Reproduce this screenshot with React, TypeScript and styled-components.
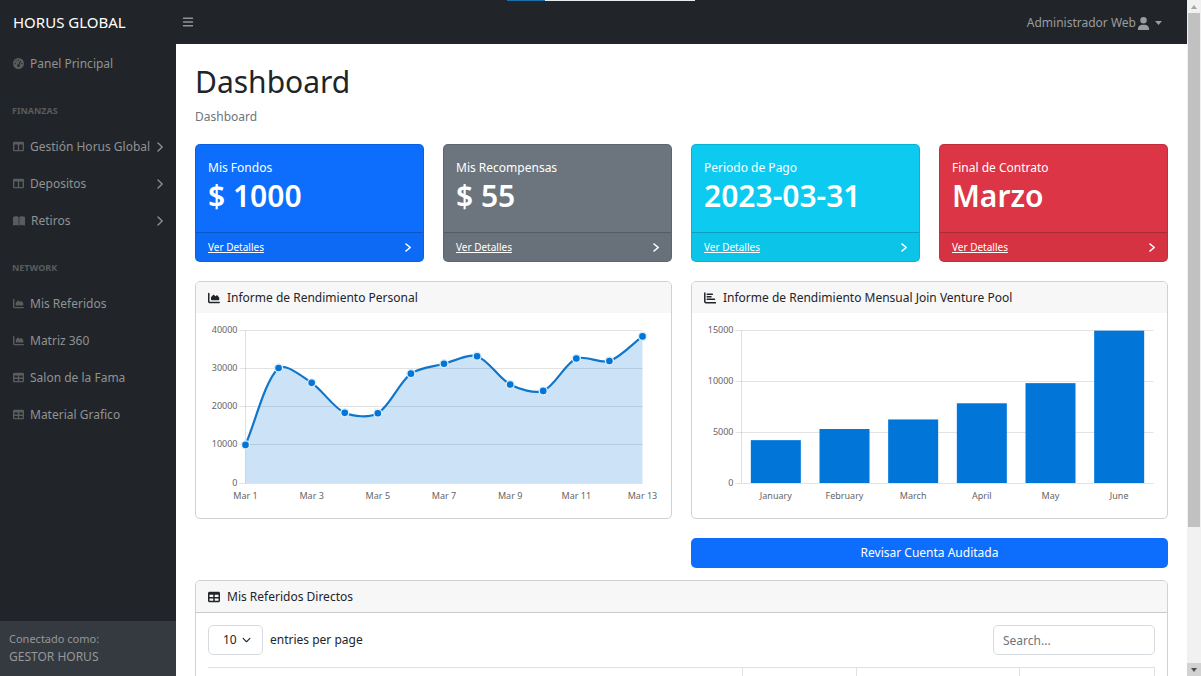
import React from "react";
import styled, { createGlobalStyle } from "styled-components";
import {
  FaBars,
  FaBookOpen,
  FaChartArea,
  FaChevronDown,
  FaGaugeHigh,
  FaTable,
  FaTableColumns,
  FaUser,
} from "react-icons/fa6";

const GlobalStyle = createGlobalStyle`
  *, *::before, *::after { box-sizing: border-box; }
  body {
    margin: 0;
    font-family: "Segoe UI", "Noto Sans", "Open Sans", sans-serif;
    font-size: 12px;
    line-height: 18px;
    color: #212529;
    background: #fff;
  }
  button, input, select { font: inherit; color: inherit; }
`;

const Window = styled.div`
  display: flex;
  height: 100vh;
  overflow: hidden;
`;

const Shell = styled.div`
  flex: 1;
  min-width: 0;
  display: grid;
  grid-template: 44px minmax(0, 1fr) / 176px minmax(0, 1fr);
`;

const TopBar = styled.header`
  grid-column: 1 / -1;
  display: flex;
  align-items: center;
  background: #212529;
`;

const Brand = styled.a`
  width: 176px;
  padding-left: 13px;
  font-size: 15px;
  color: #fff;
  text-decoration: none;
`;

const MenuToggle = styled.button`
  display: flex;
  padding: 6px;
  border: 0;
  background: none;
  color: #909294;
`;

const UserMenu = styled.button`
  display: flex;
  align-items: center;
  gap: 5px;
  margin-left: auto;
  padding: 7px 25px 5px 6px;
  border: 0;
  background: none;
  color: #9a9c9e;
`;

const UserName = styled.span`
  display: flex;
  align-items: center;
  gap: 1px;
`;

const LoadingStrip = styled.div`
  position: absolute;
  top: 0;
  left: 0;
  right: 0;
  margin: 0 auto;
  width: 188px;
  height: 1px;
  background: linear-gradient(to right, #1d6fa8 20%, #e6ecee 20%);
`;

const Sidebar = styled.nav`
  display: flex;
  flex-direction: column;
  background: #212529;
  color: #909294;
`;

const NavLinks = styled.div`
  flex: 1;
  min-height: 0;
  padding-top: 1px;
`;

const NavHeading = styled.h2`
  margin: 0;
  padding: 22px 12px 10px;
  font-size: 9px;
  line-height: 14px;
  font-weight: 700;
  text-transform: uppercase;
  color: #595c5f;
`;

const NavItem = styled.a`
  display: flex;
  align-items: center;
  gap: 6px;
  height: 37px;
  padding: 0 13px;
  color: #909294;
  text-decoration: none;
  white-space: nowrap;

  > svg { color: #5a5d60; flex: none; }
  > svg + span + svg { margin-left: auto; color: #909294; }
`;

const SidebarFooter = styled.div`
  padding: 9px 9px 10px;
  background: #343a40;
  color: #959799;
`;

const FooterCaption = styled.div`
  font-size: 11px;
`;

const Main = styled.main`
  min-width: 0;
  padding: 0 19px;
  overflow: auto;
  scrollbar-width: none;
`;

const PageTitle = styled.h1`
  margin: 0;
  padding-top: 19px;
  font-size: 30px;
  line-height: 38px;
  font-weight: 400;
`;

const Breadcrumb = styled.div`
  padding: 7px 0 18px;
  color: #6c757d;
`;

const StatRow = styled.section`
  display: grid;
  grid-template-columns: repeat(4, minmax(0, 1fr));
  gap: 19px;
  margin-bottom: 19px;
`;

const StatCard = styled.article<{ $color: string }>`
  border: 1px solid rgba(0, 0, 0, 0.12);
  border-radius: 5px;
  background: ${(p) => p.$color};
  color: #fff;
`;

const StatBody = styled.div`
  height: 87px;
  padding: 13px 12px;
`;

const StatLabel = styled.div`
  line-height: 19px;
`;

const StatValue = styled.div`
  font-size: 30px;
  line-height: 38px;
  font-weight: 600;
`;

const StatFooter = styled.div`
  display: flex;
  align-items: center;
  justify-content: space-between;
  height: 29px;
  padding: 0 12px;
  border-top: 1px solid rgba(0, 0, 0, 0.18);
  background: rgba(0, 0, 0, 0.03);
  font-size: 10px;

  a { color: #fff; }
`;

const TwoColumns = styled.section`
  display: grid;
  grid-template-columns: repeat(2, minmax(0, 1fr));
  gap: 19px;
  margin-bottom: 12px;
`;

const Card = styled.article`
  border: 1px solid #cfd1d3;
  border-radius: 5px;
  background: #fff;
  overflow: hidden;
`;

const CardHeader = styled.h2<{ $ruled?: boolean }>`
  display: flex;
  align-items: center;
  gap: 7px;
  height: 32px;
  margin: 0;
  padding: 0 12px;
  border-bottom: 1px solid ${(p) => (p.$ruled ? "#c8cacc" : "#fff")};
  background: #f7f7f7;
  font-size: 12px;
  font-weight: 400;
`;

const CardBody = styled.div`
  padding: 12px;
`;

const Chart = styled.svg`
  display: block;
  width: 100%;
  overflow: visible;

  text { font-size: 9px; fill: #666; }
`;

const AuditButton = styled.button`
  grid-column: 2;
  height: 30px;
  border: 0;
  border-radius: 5px;
  background: #0d6efd;
  color: #fff;
`;

const TableTools = styled.div`
  display: flex;
  align-items: center;
  justify-content: space-between;
  margin-bottom: 12px;
`;

const PageSize = styled.label`
  display: flex;
  align-items: center;
  gap: 7px;
`;

const SelectWrap = styled.span`
  position: relative;
  display: flex;

  svg {
    position: absolute;
    right: 12px;
    top: 10px;
    pointer-events: none;
  }
`;

const Select = styled.select`
  width: 55px;
  height: 30px;
  padding: 0 14px;
  border: 1px solid #d5dade;
  border-radius: 5px;
  background: #fff;
  appearance: none;
`;

const Search = styled.input`
  width: 162px;
  height: 30px;
  padding: 0 9px;
  border: 1px solid #d5dade;
  border-radius: 5px;

  &::placeholder { color: #6c757d; opacity: 1; }
`;

const Table = styled.table`
  width: 100%;
  table-layout: fixed;
  border-collapse: collapse;

  th {
    height: 32px;
    border-top: 1px solid #dee2e6;
    border-right: 1px solid #dee2e6;
  }
`;

const ScrollTrack = styled.div`
  display: flex;
  flex-direction: column;
  align-items: center;
  width: 14px;
  background: #f1f1f1;
`;

const ScrollArrow = styled.div<{ $shaded?: boolean }>`
  display: flex;
  align-items: center;
  justify-content: center;
  width: 100%;
  height: 13px;
  background: ${(p) => (p.$shaded ? "#d2d2d2" : "#f1f1f1")};
`;

const ScrollThumb = styled.div`
  width: 12px;
  height: 76%;
  margin-bottom: auto;
  background: #c1c1c1;
`;

type Point = { x: number; y: number };

const LEFT = 37.5;
const TOP = 4.5;
const BOTTOM = 157;

const lineValues = [10000, 30162, 26263, 18394, 18287, 28682, 31274, 33259, 25849, 24159, 32651, 31984, 38451];
const barData: [string, number][] = [
  ["January", 4215],
  ["February", 5312],
  ["March", 6251],
  ["April", 7841],
  ["May", 9821],
  ["June", 14984],
];

const toY = (value: number, max: number) => BOTTOM - (value / max) * (BOTTOM - TOP);

function smoothPath(points: Point[], tension: number) {
  const controls = points.map((cur, i) => {
    const prev = points[i - 1] ?? cur;
    const next = points[i + 1] ?? cur;
    const before = Math.hypot(cur.x - prev.x, cur.y - prev.y);
    const after = Math.hypot(next.x - cur.x, next.y - cur.y);
    const a = (tension * before) / (before + after);
    const b = (tension * after) / (before + after);
    return {
      inX: cur.x - a * (next.x - prev.x),
      inY: cur.y - a * (next.y - prev.y),
      outX: cur.x + b * (next.x - prev.x),
      outY: cur.y + b * (next.y - prev.y),
    };
  });
  return points
    .map((p, i) =>
      i === 0
        ? `M${p.x} ${p.y}`
        : `C${controls[i - 1].outX} ${controls[i - 1].outY} ${controls[i].inX} ${controls[i].inY} ${p.x} ${p.y}`
    )
    .join(" ");
}

function Grid({ ticks, max, right }: { ticks: number[]; max: number; right: number }) {
  return (
    <g>
      {ticks.map((t) => {
        const y = Math.floor(toY(t, max)) + 0.5;
        return (
          <g key={t}>
            <line x1={LEFT - 6} x2={right} y1={y} y2={y} stroke="#000" strokeOpacity={0.11} />
            <text x={LEFT - 8} y={y + 2} textAnchor="end">{t}</text>
          </g>
        );
      })}
    </g>
  );
}

function AreaChart() {
  const right = 434.5;
  const step = (right - LEFT) / (lineValues.length - 1);
  const points = lineValues.map((v, i) => ({ x: LEFT + i * step, y: toY(v, 40000) }));
  const path = smoothPath(points, 0.3);
  return (
    <Chart viewBox="0 0 451 180" role="img" aria-label="Informe de Rendimiento Personal">
      <Grid ticks={[0, 10000, 20000, 30000, 40000]} max={40000} right={right} />
      <line x1={LEFT} x2={LEFT} y1={TOP} y2={BOTTOM} stroke="#000" strokeOpacity={0.12} />
      <path d={`${path} L${right} ${BOTTOM} L${LEFT} ${BOTTOM} Z`} fill="#0275d8" fillOpacity={0.2} />
      <path d={path} fill="none" stroke="#0f76cb" strokeWidth={2.2} />
      {points.map((p, i) => (
        <circle key={i} cx={p.x} cy={p.y} r={4} fill="#0275d8" stroke="#dcecf9" strokeWidth={1.4} />
      ))}
      {points.map((p, i) =>
        i % 2 === 0 ? (
          <text key={i} x={p.x} y={173} textAnchor="middle">{`Mar ${i + 1}`}</text>
        ) : null
      )}
    </Chart>
  );
}

function BarChart() {
  const right = 449.5;
  const step = (right - LEFT) / barData.length;
  return (
    <Chart viewBox="0 0 451 180" role="img" aria-label="Informe de Rendimiento Mensual Join Venture Pool">
      <Grid ticks={[0, 5000, 10000, 15000]} max={15000} right={right} />
      <line x1={LEFT} x2={LEFT} y1={TOP} y2={BOTTOM} stroke="#000" strokeOpacity={0.12} />
      {barData.map(([month, value], i) => {
        const center = LEFT + (i + 0.5) * step;
        const y = toY(value, 15000);
        return (
          <g key={month}>
            <rect x={center - 25} y={y} width={50} height={BOTTOM - y} fill="#0275d8" />
            <text x={center} y={173} textAnchor="middle">{month}</text>
          </g>
        );
      })}
    </Chart>
  );
}

function ReportBarsIcon() {
  return (
    <svg width="12" height="12" viewBox="0 0 12 12" fill="none" stroke="currentColor" aria-hidden="true">
      <path d="M0.800 0.500V9.500Q0.800 10.700 2 10.700H12" strokeWidth="1.500" />
      <path d="M3.200 2.200H8.300M3.200 4.700H7M3.200 7.200H10.500" strokeWidth="1.500" strokeLinecap="round" />
    </svg>
  );
}

function Chevron({ height, weight }: { height: number; weight: number }) {
  return (
    <svg width="6" height={height} viewBox={`0 0 6 ${height}`} fill="none" stroke="currentColor" strokeWidth={weight} strokeLinecap="round" strokeLinejoin="round" aria-hidden="true">
      <path d={`M1 1 5.200 ${height / 2} 1 ${height - 1}`} />
    </svg>
  );
}

const finanzas = [
  { label: "Gestión Horus Global", Icon: FaTableColumns, size: 11 },
  { label: "Depositos", Icon: FaTableColumns, size: 11 },
  { label: "Retiros", Icon: FaBookOpen, size: 12 },
];

const network = [
  { label: "Mis Referidos", Icon: FaChartArea },
  { label: "Matriz 360", Icon: FaChartArea },
  { label: "Salon de la Fama", Icon: FaTable },
  { label: "Material Grafico", Icon: FaTable },
];

const stats = [
  { label: "Mis Fondos", value: "$ 1000", color: "#0d6efd" },
  { label: "Mis Recompensas", value: "$ 55", color: "#6c757d" },
  { label: "Periodo de Pago", value: "2023-03-31", color: "#0dcaf0" },
  { label: "Final de Contrato", value: "Marzo", color: "#dc3545" },
];

export default function App() {
  return (
    <Window>
      <GlobalStyle />
      <Shell>
        <TopBar>
          <Brand href="#">HORUS GLOBAL</Brand>
          <MenuToggle aria-label="Menu"><FaBars size={12} /></MenuToggle>
          <UserMenu>
            <UserName>Administrador Web<FaUser size={13} /></UserName>
            <svg width="7" height="4" viewBox="0 0 7 4" fill="currentColor" aria-hidden="true"><path d="M0 0H7L3.500 4Z" /></svg>
          </UserMenu>
        </TopBar>
        <Sidebar>
          <NavLinks>
            <NavItem href="#"><FaGaugeHigh size={11} /><span>Panel Principal</span></NavItem>
            <NavHeading>Finanzas</NavHeading>
            {finanzas.map(({ label, Icon, size }) => (
              <NavItem href="#" key={label}>
                <Icon size={size} />
                <span>{label}</span>
                <Chevron height={10} weight={1.3} />
              </NavItem>
            ))}
            <NavHeading>Network</NavHeading>
            {network.map(({ label, Icon }) => (
              <NavItem href="#" key={label}><Icon size={11} /><span>{label}</span></NavItem>
            ))}
          </NavLinks>
          <SidebarFooter>
            <FooterCaption>Conectado como:</FooterCaption>
            GESTOR HORUS
          </SidebarFooter>
        </Sidebar>
        <Main>
          <PageTitle>Dashboard</PageTitle>
          <Breadcrumb>Dashboard</Breadcrumb>
          <StatRow>
            {stats.map((s) => (
              <StatCard $color={s.color} key={s.label}>
                <StatBody>
                  <StatLabel>{s.label}</StatLabel>
                  <StatValue>{s.value}</StatValue>
                </StatBody>
                <StatFooter>
                  <a href="#">Ver Detalles</a>
                  <Chevron height={9} weight={1.6} />
                </StatFooter>
              </StatCard>
            ))}
          </StatRow>
          <TwoColumns>
            <Card>
              <CardHeader><FaChartArea size={12} />Informe de Rendimiento Personal</CardHeader>
              <CardBody><AreaChart /></CardBody>
            </Card>
            <Card>
              <CardHeader><ReportBarsIcon />Informe de Rendimiento Mensual Join Venture Pool</CardHeader>
              <CardBody><BarChart /></CardBody>
            </Card>
            <AuditButton>Revisar Cuenta Auditada</AuditButton>
          </TwoColumns>
          <Card>
            <CardHeader $ruled><FaTable size={12} />Mis Referidos Directos</CardHeader>
            <CardBody>
              <TableTools>
                <PageSize>
                  <SelectWrap>
                    <Select defaultValue="10"><option>10</option></Select>
                    <FaChevronDown size={9} />
                  </SelectWrap>
                  entries per page
                </PageSize>
                <Search type="search" placeholder="Search..." aria-label="Search" />
              </TableTools>
              <Table>
                <colgroup>
                  <col />
                  <col width="114" />
                  <col width="163" />
                  <col width="135" />
                </colgroup>
                <thead>
                  <tr><th /><th /><th /><th /></tr>
                </thead>
              </Table>
            </CardBody>
          </Card>
        </Main>
      </Shell>
      <ScrollTrack aria-hidden="true">
        <ScrollArrow>
          <svg width="6" height="4" viewBox="0 0 6 4"><path d="M0 4 3 0 6 4Z" fill="#a3a3a3" /></svg>
        </ScrollArrow>
        <ScrollThumb />
        <ScrollArrow $shaded>
          <svg width="6" height="4" viewBox="0 0 6 4"><path d="M0 0 3 4 6 0Z" fill="#505050" /></svg>
        </ScrollArrow>
      </ScrollTrack>
      <LoadingStrip />
    </Window>
  );
}
